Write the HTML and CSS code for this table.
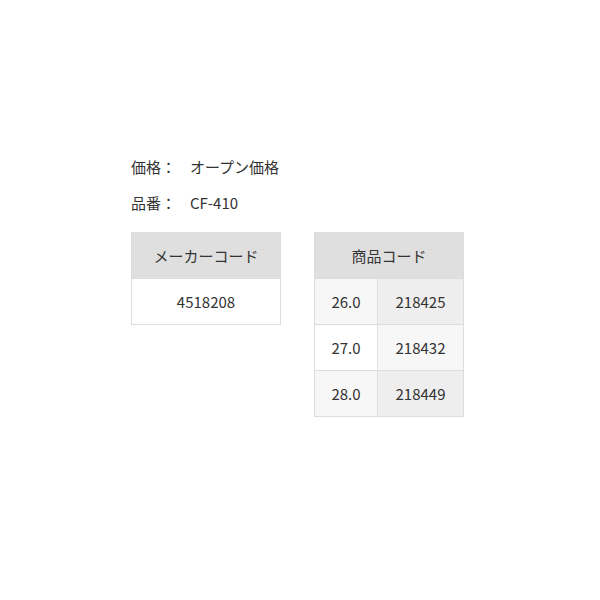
FILE: index.html
```html
<!DOCTYPE html>
<html lang="ja">
<head>
<meta charset="utf-8">
<link rel="stylesheet" href="styles.css">
</head>
<body>
<div class="wrap">
  <div class="spec"><span class="label">価格：</span><span class="value">オープン価格</span></div>
  <div class="spec"><span class="label">品番：</span><span class="value">CF-410</span></div>
  <div class="tables">
    <table class="tbl maker">
      <tr><th>メーカーコード</th></tr>
      <tr><td class="white">4518208</td></tr>
    </table>
    <table class="tbl product">
      <colgroup><col class="col-size"><col class="col-code"></colgroup>
      <tr><th colspan="2">商品コード</th></tr>
      <tr><td class="light">26.0</td><td class="mid">218425</td></tr>
      <tr><td class="white">27.0</td><td class="light">218432</td></tr>
      <tr><td class="light">28.0</td><td class="mid">218449</td></tr>
    </table>
  </div>
</div>
</body>
</html>
```
FILE: styles.css
```css
html, body {
  margin: 0;
  padding: 0;
  background: #fff;
}
body {
  font-family: "Noto Sans CJK JP", "Noto Sans", sans-serif;
  font-size: 15px;
  color: #333;
}
.wrap {
  padding: 149px 0 0 131px;
}
.spec {
  height: 36px;
  line-height: 36px;
  display: flex;
}
.label {
  width: 59px;
}
.tables {
  margin-top: 11px;
  display: flex;
  gap: 33px;
  align-items: flex-start;
}
.tbl {
  border-collapse: collapse;
  width: 150px;
  table-layout: fixed;
}
.tbl th, .tbl td {
  border: 1px solid #dddddd;
  height: 45px;
  padding: 0;
  text-align: center;
  font-weight: normal;
  vertical-align: middle;
}
.tbl th {
  background: #dfdfdf;
}
.white { background: #ffffff; }
.light { background: #f7f7f7; }
.mid { background: #eeeeee; }
.col-size { width: 63px; }
.col-code { width: 87px; }
.product { width: 150px; }
.product .col-code { width: 86px; }
```
